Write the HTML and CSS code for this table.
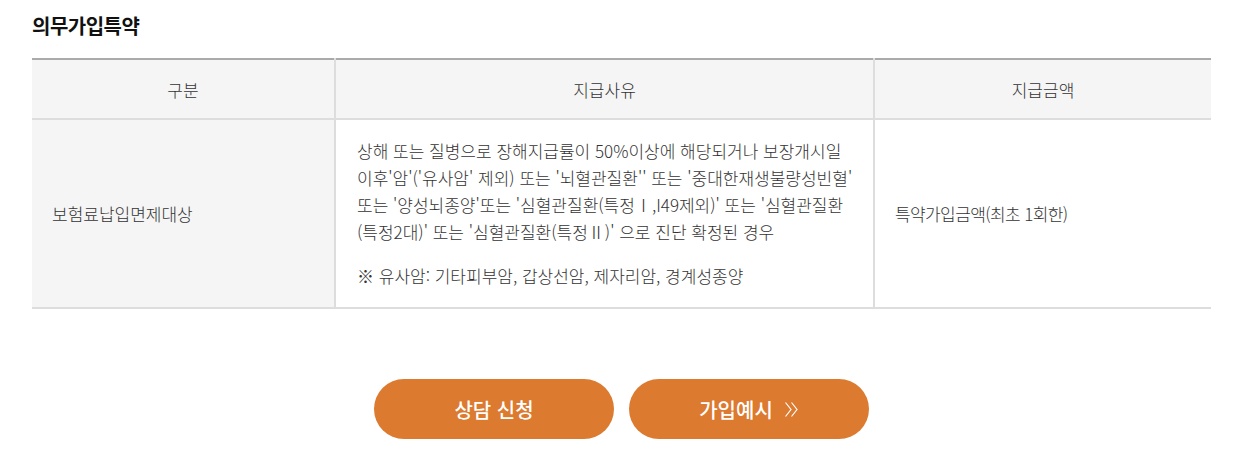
FILE: index.html
```html
<!DOCTYPE html>
<html lang="ko">
<head>
<meta charset="utf-8">
<link rel="stylesheet" href="styles.css">
</head>
<body>
<div class="wrap">
  <h2 class="title">의무가입특약</h2>
  <table class="tbl">
    <colgroup>
      <col class="c1"><col class="c2"><col class="c3">
    </colgroup>
    <thead>
      <tr><th>구분</th><th>지급사유</th><th>지급금액</th></tr>
    </thead>
    <tbody>
      <tr>
        <td class="gray">보험료납입면제대상</td>
        <td class="reason">
          <p>상해 또는 질병으로 장해지급률이 50%이상에 해당되거나 보장개시일 이후'암'('유사암' 제외) 또는 '뇌혈관질환'' 또는 '중대한재생불량성빈혈' 또는 '양성뇌종양'또는 '심혈관질환(특정Ⅰ,I49제외)' 또는 '심혈관질환(특정2대)' 또는 '심혈관질환(특정Ⅱ)' 으로 진단 확정된 경우</p>
          <p class="note">※ 유사암: 기타피부암, 갑상선암, 제자리암, 경계성종양</p>
        </td>
        <td class="amount">특약가입금액(최초 1회한)</td>
      </tr>
    </tbody>
  </table>
  <div class="btns">
    <a class="btn" href="#">상담 신청</a>
    <a class="btn" href="#">가입예시
      <svg class="chev" width="15" height="17" viewBox="0 0 15 17" fill="none" stroke="#fff" stroke-width="1.2"><polyline points="1.5,1.5 7,8.5 1.5,15.5"/><polyline points="7.5,1.5 13,8.5 7.5,15.5"/></svg>
    </a>
  </div>
</div>
</body>
</html>
```

FILE: styles.css
```css
* { box-sizing: border-box; }
html, body { margin: 0; padding: 0; background: #fff; }
body {
  font-family: "Noto Sans CJK KR", "Noto Sans", sans-serif;
  color: #333;
  font-size: 17px;
}
.wrap { padding: 13px 27px 0 32px; }
.title {
  margin: 0 0 19px;
  font-size: 20px;
  font-weight: 700;
  line-height: 26px;
  letter-spacing: -0.5px;
  color: #111;
}
.tbl {
  width: 1179px;
  border-collapse: collapse;
  table-layout: fixed;
  border-top: 2px solid #aaa;
  word-break: keep-all;
}
.c1 { width: 303px; }
.c2 { width: 539px; }
.c3 { width: 337px; }
.tbl th {
  height: 60px;
  background: #f5f5f5;
  font-weight: 300;
  color: #333;
  border-bottom: 2px solid #ddd;
  border-left: 2px solid #ddd;
  padding: 0;
}
.tbl th:first-child, .tbl td:first-child { border-left: none; }
.tbl td {
  border-bottom: 2px solid #ddd;
  border-left: 2px solid #ddd;
  padding: 0 20px;
  vertical-align: middle;
  font-weight: 300;
  line-height: 27px;
}
.tbl td.gray { background: #f5f5f5; }
.tbl td.reason { padding: 17px 20px 18px 21px; }
.tbl td.amount { letter-spacing: -0.6px; }
.reason p { margin: 0; }
.reason .note { margin-top: 17px; }
.btns {
  display: flex;
  justify-content: center;
  gap: 15px;
  margin-top: 70px;
  width: 1179px;
}
.btn {
  width: 240px;
  height: 60px;
  border-radius: 30px;
  background: #dc7a30;
  color: #fff;
  text-decoration: none;
  font-size: 20px;
  font-weight: 500;
  display: flex;
  align-items: center;
  justify-content: center;
  gap: 11px;
}
.chev { display: block; }
```
